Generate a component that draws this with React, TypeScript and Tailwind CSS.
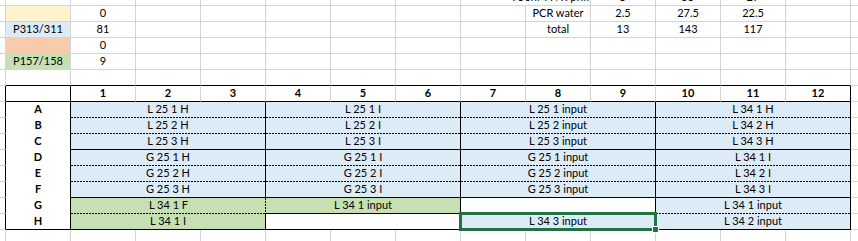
import type { ReactNode } from 'react';
import clsx from 'clsx';

/**
 * Excel sheet fragment: a little reagent tally up top, and a 96-well
 * plate map (rows A–H × columns 1–12) with merged, colour-filled blocks.
 */

type Edge = 'g' | 's' | 'd' | 'n'; // gridline, solid, dashed, none
type Width = 'edge' | 'col' | 'two' | 'three' | 'rest';

const RIGHT: Record<Edge, string> = {
  g: 'border-r border-r-[#d4d4d4]',
  s: 'border-r border-r-black',
  d: '',
  n: '',
};
const BOTTOM: Record<Edge, string> = {
  g: 'border-b border-b-[#d4d4d4]',
  s: 'border-b border-b-black',
  d: '',
  n: '',
};

// dashed hairlines are painted on the gridline pixel: 2px on, 1px off
const DASH_B =
  'bg-[repeating-linear-gradient(90deg,#000_0_2px,transparent_2px_3px)] bg-size-[100%_1px] bg-bottom bg-no-repeat';
const DASH_BR =
  'bg-[repeating-linear-gradient(90deg,#000_0_2px,transparent_2px_3px),repeating-linear-gradient(180deg,#000_0_2px,transparent_2px_3px)] bg-size-[100%_1px,1px_100%] bg-position-[left_bottom,right_top] bg-no-repeat';

const WIDTH: Record<Width, string> = {
  edge: 'w-[6px]',
  col: 'w-[65px]',
  two: 'w-[130px]',
  three: 'w-[195px]',
  rest: 'flex-1',
};

const BLUE = 'bg-[#ddebf7]';
const GREEN = 'bg-[#c6e0b4]';
const YELLOW = 'bg-[#fff2cc]';
const PEACH = 'bg-[#f8cbad]';

interface CellProps {
  w?: Width;
  r?: Edge;
  b?: Edge;
  bg?: string;
  bold?: boolean;
  className?: string;
  children?: ReactNode;
}

function Cell({ w = 'col', r = 'g', b = 'g', bg, bold, className, children }: CellProps) {
  const dash = b === 'd' && r === 'd' ? DASH_BR : b === 'd' ? DASH_B : '';
  return (
    <div
      className={clsx(
        'shrink-0 whitespace-nowrap text-center leading-[14px]',
        WIDTH[w],
        RIGHT[r],
        BOTTOM[b],
        bg,
        dash,
        bold && 'font-bold',
        className,
      )}
    >
      {children}
    </div>
  );
}

// upper block: col A label, col 1 count, then the mix table in cols 8–11
const tally = [
  { bg: YELLOW, label: '', count: '0', mix: ['PCR water', '2.5', '27.5', '22.5'] },
  { bg: BLUE, label: 'P313/311', count: '81', mix: ['total', '13', '143', '117'] },
  { bg: PEACH, label: '', count: '0', mix: [] },
  { bg: GREEN, label: 'P157/158', count: '9', mix: [] },
];

type Block = { text?: string; bg: string; r: Edge; b: Edge; selected?: boolean };

const wells = (prefix: string, b: Edge, last: string): Block[] => [
  { text: `${prefix} H`, bg: BLUE, r: 's', b },
  { text: `${prefix} I`, bg: BLUE, r: 's', b },
  { text: `${prefix} input`, bg: BLUE, r: 's', b },
  { text: last, bg: BLUE, r: 's', b },
];

const plate: { label: string; blocks: Block[] }[] = [
  { label: 'A', blocks: wells('L 25 1', 'd', 'L 34 1 H') },
  { label: 'B', blocks: wells('L 25 2', 'd', 'L 34 2 H') },
  { label: 'C', blocks: wells('L 25 3', 's', 'L 34 3 H') },
  { label: 'D', blocks: wells('G 25 1', 'd', 'L 34 1 I') },
  { label: 'E', blocks: wells('G 25 2', 'd', 'L 34 2 I') },
  { label: 'F', blocks: wells('G 25 3', 's', 'L 34 3 I') },
  {
    label: 'G',
    blocks: [
      { text: 'L 34 1 F', bg: GREEN, r: 'd', b: 'd' },
      { text: 'L 34 1 input', bg: GREEN, r: 's', b: 's' },
      { bg: 'bg-white', r: 's', b: 'n' },
      { text: 'L 34 1 input', bg: BLUE, r: 's', b: 'd' },
    ],
  },
  {
    label: 'H',
    blocks: [
      { text: 'L 34 1 I', bg: GREEN, r: 's', b: 's' },
      { bg: 'bg-white', r: 's', b: 's' },
      { text: 'L 34 3 input', bg: BLUE, r: 's', b: 's', selected: true },
      { text: 'L 34 2 input', bg: BLUE, r: 's', b: 's' },
    ],
  },
];

const COLS = Array.from({ length: 12 }, (_, i) => i + 1);

export default function App() {
  return (
    <div className="h-[241px] w-[858px] overflow-hidden bg-white font-['Lato',sans-serif] text-[11px] text-black">
      {/* partial row cut off at the top */}
      <div className="flex h-[6px]">
        <Cell w="edge" />
        <Cell />
        {COLS.slice(0, 6).map((c) => (
          <Cell key={c} />
        ))}
        <Cell w="two" className="flex items-end justify-end overflow-hidden pb-px">
          <span className="-mr-3 shrink-0">750nM F/R primer</span>
        </Cell>
        <Cell className="flex items-end justify-center overflow-hidden pb-px">5</Cell>
        <Cell className="flex items-end justify-center overflow-hidden pb-px">55</Cell>
        <Cell className="flex items-end justify-center overflow-hidden pb-px">27</Cell>
        <Cell />
        <Cell w="rest" r="n" />
      </div>

      {tally.map((row, i) => (
        <div key={i} className="flex h-4">
          <Cell w="edge" />
          <Cell bg={row.bg}>{row.label}</Cell>
          <Cell>{row.count}</Cell>
          {COLS.slice(0, 6).map((c) => (
            <Cell key={c} />
          ))}
          {[0, 1, 2, 3].map((j) => (
            <Cell key={j}>{row.mix[j]}</Cell>
          ))}
          <Cell />
          <Cell w="rest" r="n" />
        </div>
      ))}

      {/* blank row; its bottom edge is the plate's top border */}
      <div className="flex h-4">
        <Cell w="edge" />
        <Cell b="s" />
        {COLS.map((c) => (
          <Cell key={c} b="s" />
        ))}
        <Cell w="rest" r="n" />
      </div>

      {/* plate header */}
      <div className="flex h-4">
        <Cell w="edge" r="s" />
        <Cell r="s" b="s" />
        {COLS.map((c) => (
          <Cell key={c} r={c === 12 ? 's' : 'g'} b="s" bold>
            {c}
          </Cell>
        ))}
        <Cell w="rest" r="n" />
      </div>

      {plate.map((row) => (
        <div key={row.label} className="flex h-4">
          <Cell w="edge" r="s" />
          <Cell r="s" b={row.label === 'H' ? 's' : 'n'} bold>
            {row.label}
          </Cell>
          {row.blocks.map((blk, j) => (
            <Cell key={j} w="three" r={blk.r} b={blk.b} bg={blk.bg} className={blk.selected ? 'relative' : undefined}>
              {blk.text}
              {blk.selected ? (
                <>
                  <div className="pointer-events-none absolute -inset-[2px] border-[3px] border-[#217346]" />
                  <div className="pointer-events-none absolute -right-[4px] -bottom-[4px] h-[7px] w-[7px] border border-white bg-[#217346]" />
                </>
              ) : null}
            </Cell>
          ))}
          <Cell w="rest" r="n" />
        </div>
      ))}

      {/* partial row at the bottom */}
      <div className="flex h-[11px]">
        <Cell w="edge" b="n" />
        <Cell b="n" />
        {COLS.map((c) => (
          <Cell key={c} b="n" />
        ))}
        <Cell w="rest" r="n" b="n" />
      </div>
    </div>
  );
}
